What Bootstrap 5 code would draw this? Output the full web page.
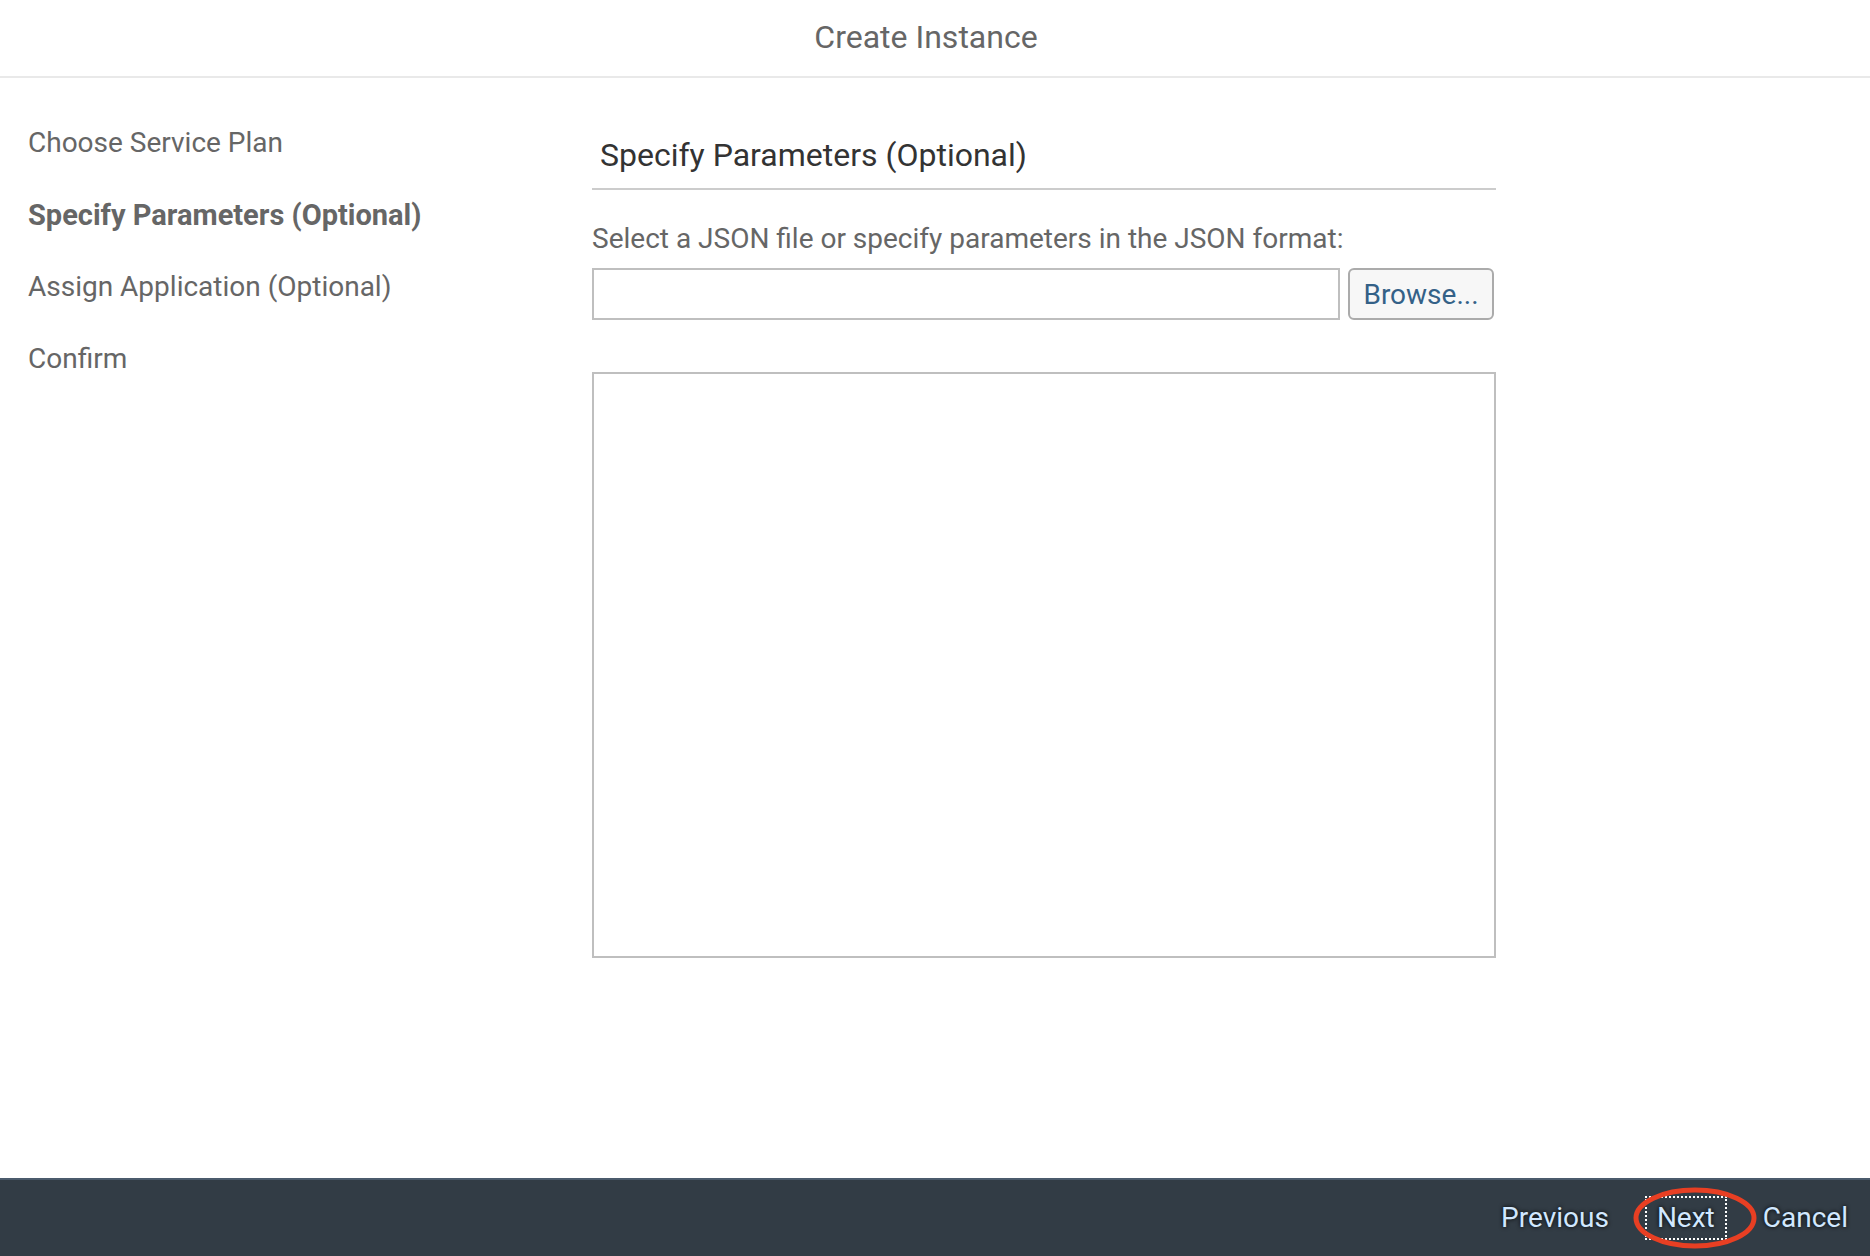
<!DOCTYPE html>
<html lang="en">
<head>
<meta charset="utf-8">
<meta name="viewport" content="width=device-width, initial-scale=1">
<title>Create Instance</title>
<link href="https://cdn.jsdelivr.net/npm/bootstrap@5.3.0/dist/css/bootstrap.min.css" rel="stylesheet">
<style>
body { font-family: Roboto, "Liberation Sans", sans-serif; font-size: 28px; line-height: 36px; color: #666; background: #fff; }
.wizard-head { border-bottom: 2px solid #e9e9e9; padding: 19px 18px 21px 0; }
.wizard-head h1, .step-title { font-size: 32px; line-height: 36px; font-weight: 400; }
.steps { flex: 0 1 564px; padding-top: 29px; }
.steps a { display: block; padding: 18px 0; color: inherit; text-decoration: none; }
.steps a.current { font-size: 29px; font-weight: 700; }
.wizard-main { padding: 0 28px; }
.step-panel { flex: 0 1 904px; min-width: 0; padding-top: 59px; }
.step-title { color: #333; border-bottom: 2px solid #ccc; padding: 0 8px 15px; margin-bottom: 31px; }
.form-control, .form-control:focus { border: 2px solid #bfbfbf; border-radius: 0; font-size: 28px; line-height: 36px; box-shadow: none; }
.file-row { height: 52px; margin: 11px 2px 52px 0; }
.params { height: 586px; resize: none; }
.btn-browse { --bs-btn-color: #346187; --bs-btn-bg: #f7f7f7; --bs-btn-border-color: #ababab; --bs-btn-hover-bg: #eaeaea; --bs-btn-hover-color: #346187; --bs-btn-hover-border-color: #ababab; flex: none; width: 146px; padding: 2px 0 0; border-width: 2px; border-radius: 6px; font-size: 28px; line-height: 36px; }
.wizard-foot { background: #323c45; border-top: 2px solid #4b5b6c; padding: 16px 10px; }
.foot-btn { border: 2px solid transparent; border-radius: 0; padding: 2px 10px; font-size: 28px; line-height: 36px; color: #d1e8ff; text-shadow: 0 0 4px #000; }
.foot-btn:hover { color: #fff; }
.foot-btn.focused { border: 2px dotted #fff; }
.next-wrap { margin: 0 24px; }
.ring { position: absolute; left: -13px; top: -10px; width: 126px; height: 64px; pointer-events: none; }
</style>
</head>
<body>
<div class="d-flex flex-column min-vh-100">
  <header class="wizard-head text-center"><h1 class="m-0">Create Instance</h1></header>
  <main class="wizard-main d-flex flex-grow-1">
    <nav class="steps" aria-label="Steps">
      <a href="#plan">Choose Service Plan</a>
      <a href="#params" class="current" aria-current="step">Specify Parameters (Optional)</a>
      <a href="#assign">Assign Application (Optional)</a>
      <a href="#confirm">Confirm</a>
    </nav>
    <section class="step-panel" id="params">
      <h2 class="step-title">Specify Parameters (Optional)</h2>
      <label for="file" class="d-block">Select a JSON file or specify parameters in the JSON format:</label>
      <div class="file-row d-flex gap-2">
        <input type="text" class="form-control" id="file">
        <button type="button" class="btn btn-browse">Browse...</button>
      </div>
      <textarea class="form-control params d-block" aria-label="JSON parameters"></textarea>
    </section>
  </main>
  <footer class="wizard-foot d-flex justify-content-end">
    <button type="button" class="btn foot-btn">Previous</button>
    <div class="next-wrap position-relative">
      <button type="button" class="btn foot-btn focused d-block">Next</button>
      <svg class="ring" viewBox="0 0 126 64" aria-hidden="true"><ellipse cx="63" cy="32" rx="59" ry="28" fill="none" stroke="#e83f23" stroke-width="5"/></svg>
    </div>
    <button type="button" class="btn foot-btn">Cancel</button>
  </footer>
</div>
<script src="https://cdn.jsdelivr.net/npm/bootstrap@5.3.0/dist/js/bootstrap.bundle.min.js"></script>
</body>
</html>
